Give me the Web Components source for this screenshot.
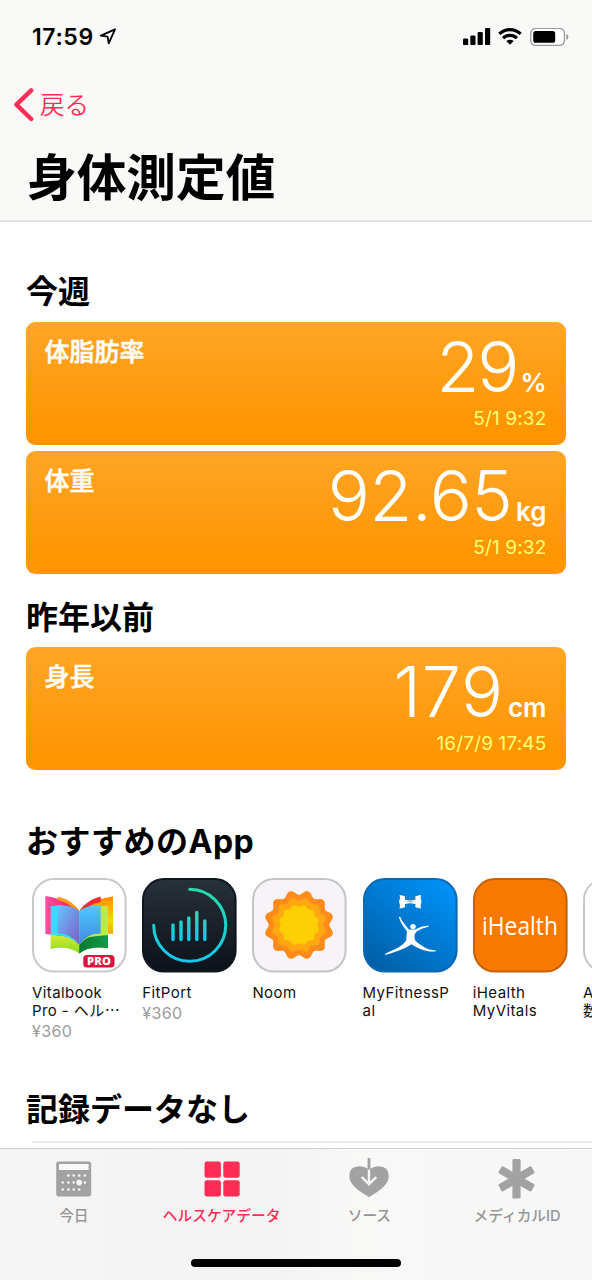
<!DOCTYPE html>
<html lang="ja">
<head>
<meta charset="utf-8">
<title>身体測定値</title>
<style>
  html, body {
    margin: 0;
    padding: 0;
    background: #fff;
  }
  body {
    width: 592px;
    height: 1280px;
    overflow: hidden;
    font-family: Inter, "Noto Sans CJK JP", sans-serif;
    color: #000;
  }
  .dots {
    font-family: "Noto Sans CJK JP", sans-serif;
    line-height: 1;
  }
</style>
</head>
<body>
<health-page>
  <status-bar slot="header" time="17:59"></status-bar>
  <nav-header slot="header" back="戻る">身体測定値</nav-header>

  <section-title style="--top: 46px; --h: 54px">今週</section-title>
  <data-card label="体脂肪率" value="29" unit="%" date="5/1 9:32" style="--vs: -2.4px; --gap: 3.5px"></data-card>
  <data-card label="体重" value="92.65" unit="kg" date="5/1 9:32" style="--vs: -0.4px; --gap: 3.5px"></data-card>
  <section-title style="--top: 14px; --h: 53px">昨年以前</section-title>
  <data-card label="身長" value="179" unit="cm" date="16/7/9 17:45" style="--vs: 0.8px; --gap: 4px"></data-card>
  <section-title style="--top: 42px; --h: 60px; --ls: 0.5px">おすすめのApp</section-title>
  <app-row>
    <app-tile icon="vitalbook" price="¥360">Vitalbook<br>Pro - ヘル<span class="dots">…</span></app-tile>
    <app-tile icon="fitport" price="¥360">FitPort</app-tile>
    <app-tile icon="noom">Noom</app-tile>
    <app-tile icon="mfp">MyFitnessP<br>al</app-tile>
    <app-tile icon="ihealth">iHealth<br>MyVitals</app-tile>
    <app-tile icon="blank">A<br>数</app-tile>
  </app-row>
  <section-title line style="--top: 35px">記録データなし</section-title>

  <tab-bar slot="footer">
    <tab-item icon="today">今日</tab-item>
    <tab-item icon="data" active>ヘルスケアデータ</tab-item>
    <tab-item icon="source">ソース</tab-item>
    <tab-item icon="medical">メディカルID</tab-item>
  </tab-bar>
</health-page>

<script>
const make = html => {
  const template = document.createElement("template");
  template.innerHTML = html;
  return template;
};

class BaseElement extends HTMLElement {
  constructor() {
    super();
    this._root = this.attachShadow({ mode: "open" });
    this._root.appendChild(this.constructor.template.content.cloneNode(true));
  }

  // copies the named attributes into the elements with the same class
  fill(...names) {
    names.forEach(name => {
      this._root.querySelector("." + name).textContent = this.getAttribute(name) || "";
    });
  }
}

class HealthPage extends BaseElement {
  static template = make(`
<style>
:host {
  display: flex;
  flex-direction: column;
  width: 592px;
  height: 1280px;
}
header {
  box-sizing: border-box;
  flex: none;
  height: 222px;
  background: #f9f9f8;
  border-bottom: 2px solid #e2e2e2;
}
main {
  flex: 1;
  min-height: 0;
  overflow: hidden;
}
</style>
<header><slot name="header"></slot></header>
<main><slot></slot></main>
<slot name="footer"></slot>
`);
}

class StatusBar extends BaseElement {
  static template = make(`
<style>
:host {
  display: flex;
  align-items: center;
  height: 74px;
  padding: 0 23px 0 32px;
}
.time {
  font-size: 23px;
  line-height: 28px;
  font-weight: 600;
  letter-spacing: 0.6px;
}
.arrow { margin: 0 auto 0 5px; }
svg { display: block; }
.wifi { margin: 0 8px 0 7px; }
</style>
<span class="time"></span>
<svg class="arrow" width="18" height="18" viewBox="0 0 18 18" fill="none" stroke="#000" stroke-width="1.8" stroke-linejoin="round"><path d="M16 1.4 L1.8 7.6 L8.6 8.6 L9.7 15.4 Z"/></svg>
<svg class="bars" width="28" height="18" viewBox="0 0 28 18"><rect x="0" y="10.5" width="5.2" height="6.6" rx="1.2"/><rect x="7.3" y="7.5" width="5.2" height="9.6" rx="1.2"/><rect x="14.6" y="4" width="5.2" height="13.1" rx="1.2"/><rect x="22" y="0.1" width="5.2" height="17" rx="1.2"/></svg>
<svg class="wifi" width="24" height="18" viewBox="0 0 24 18" fill="none" stroke="#000" stroke-width="3.2"><path d="M1.3 5.9 A15.6 15.6 0 0 1 22.7 5.9"/><path d="M5.1 10.1 A10 10 0 0 1 18.9 10.1"/><path d="M12 16.7 L8.3 13.1 Q12 10.3 15.7 13.1 Z" fill="#000" stroke="none"/></svg>
<svg class="battery" width="39" height="19" viewBox="0 0 39 19"><rect x="0.8" y="0.4" width="33.6" height="17" rx="5" fill="#fff" stroke="#999" stroke-width="1.3"/><rect x="3.2" y="3" width="22" height="11.8" rx="2.6"/><path d="M36.3 5.8 Q38.4 6.8 38.4 8.9 Q38.4 11.2 36.3 12.1 Z" fill="#999"/></svg>
`);

  connectedCallback() {
    this.fill("time");
  }
}

class NavHeader extends BaseElement {
  static template = make(`
<style>
:host { display: block; }
.bar {
  display: flex;
  align-items: center;
  height: 62px;
  padding-left: 13px;
  color: #ff2d55;
  font-size: 24.5px;
  font-weight: 350;
}
.back { margin-top: -3px; }
svg { margin-right: 6px; }
h1 {
  margin: 0;
  padding-left: 27px;
  height: 82px;
  line-height: 84px;
  font-size: 49.7px;
  font-weight: 700;
}
</style>
<div class="bar">
  <svg width="21" height="34" viewBox="0 0 21 34" fill="none" stroke="#ff2d55" stroke-width="4.4" stroke-linecap="round" stroke-linejoin="round"><path d="M18.2 2.4 L3.4 16.6 L18.2 31"/></svg>
  <span class="back"></span>
</div>
<h1><slot></slot></h1>
`);

  connectedCallback() {
    this.fill("back");
  }
}

class SectionTitle extends BaseElement {
  static template = make(`
<style>
:host {
  display: block;
  padding-top: var(--top);
}
h2 {
  margin: 0;
  padding-left: 26px;
  height: var(--h);
  line-height: 48px;
  font-size: 32px;
  font-weight: 700;
  letter-spacing: var(--ls, 0);
  white-space: nowrap;
}
:host([line]) h2 {
  height: 55px;
}
:host([line])::after {
  content: "";
  display: block;
  margin-left: 32px;
  height: 2px;
  background: #ebebeb;
}
</style>
<h2><slot></slot></h2>
`);
}

class DataCard extends BaseElement {
  static template = make(`
<style>
:host {
  display: flex;
  justify-content: space-between;
  box-sizing: border-box;
  height: 123px;
  margin: 0 26.5px 6px 25.5px;
  padding: 0 19px;
  border-radius: 9.5px;
  background: linear-gradient(#ffa526, #ff9500 92%);
  color: #fff;
}
.label {
  padding-top: 12px;
  font-size: 25px;
  line-height: 36px;
  font-weight: 500;
  -webkit-text-stroke: 0.5px #fff;
}
.right {
  display: flex;
  flex-direction: column;
  align-items: flex-end;
}
.reading {
  display: flex;
  align-items: baseline;
  height: 84px;
  line-height: 90px;
}
.value {
  font-size: 70px;
  font-weight: 300;
  letter-spacing: var(--vs, 0);
}
.unit {
  margin-left: var(--gap, 3px);
  font-size: 26px;
  font-weight: 600;
}
.date {
  color: #ffff73;
  font-size: 19px;
  line-height: 26px;
  letter-spacing: 0.15px;
}
</style>
<div class="label"></div>
<div class="right">
  <div class="reading"><span class="value"></span><span class="unit"></span></div>
  <div class="date"></div>
</div>
`);

  connectedCallback() {
    this.fill("label", "value", "unit", "date");
  }
}

class AppRow extends BaseElement {
  static template = make(`
<style>
:host {
  display: flex;
  gap: 15.2px;
  height: 173px;
  padding-left: 32px;
  overflow: hidden;
}
</style>
<slot></slot>
`);
}

// closed wavy outline round the middle of an app icon
const wave = (radius, depth, bumps, turn) => {
  const points = [];
  for (let a = 0; a < 360; a += 3) {
    const t = (a * Math.PI) / 180;
    const r = radius + depth * Math.cos(bumps * (t - (turn * Math.PI) / 180));
    points.push((47 + r * Math.cos(t)).toFixed(2) + " " + (47 + r * Math.sin(t)).toFixed(2));
  }
  return "M" + points.join("L") + "Z";
};

const frame = (fill, stroke) =>
  `<rect x="1" y="1" width="92.6" height="92.6" rx="21" fill="${fill}" stroke="${stroke}" stroke-width="2"/>`;

const appIcons = {
  vitalbook: `
<defs>
  <linearGradient id="pink" x2="1"><stop stop-color="#ff4fa8"/><stop offset="1" stop-color="#f5103c"/></linearGradient>
  <linearGradient id="sun" x2="0" y2="1"><stop stop-color="#ff8a00"/><stop offset=".55" stop-color="#ffd800"/><stop offset="1" stop-color="#ff8a1a"/></linearGradient>
  <linearGradient id="lime" y2="1" x2="0"><stop stop-color="#f0f03c"/><stop offset="1" stop-color="#8cdc1e"/></linearGradient>
  <linearGradient id="leaf" x2="1"><stop stop-color="#067a34"/><stop offset="1" stop-color="#169a48"/></linearGradient>
  <linearGradient id="left" y2="1" x2="1"><stop stop-color="#66c4ff"/><stop offset="1" stop-color="#7d5cc4"/></linearGradient>
  <linearGradient id="right" y2="1" x2="0"><stop stop-color="#4cc8ff"/><stop offset="1" stop-color="#4488dc"/></linearGradient>
</defs>
${frame("#fff", "#c8c8c8")}
<path d="M18.7 50V71Q36 67 47.3 75.5Q58 67 76 70.3V50Z" fill="url(#lime)"/>
<path d="M47.3 75.5Q57 67 76 70.3V56Q55 56 47.3 67Z" fill="url(#leaf)"/>
<path d="M13.3 18Q38 22 47.3 33V60L13.3 56Z" fill="url(#pink)"/>
<path d="M81 18.5Q57 22 47.3 33V62Q62 53 81 56Z" fill="url(#sun)"/>
<path d="M25.7 18.5Q40 22 47.3 32.7L40 29Q34 24 25.7 22Z" fill="#ff9a16"/>
<path d="M68.7 18.5Q55 22 47.3 32.7L56 29Q62 25 68.7 24Z" fill="#f52a38"/>
<path d="M76 28Q56 27 47.3 34V60L76 57Z" fill="#bdea4a"/>
<path d="M18.7 28Q39 26 47.3 34V67Q37 56 18.7 57Z" fill="#35dcff"/>
<path d="M25.7 27Q40 27 47.3 33V67Q39 55 25.7 55.5Z" fill="url(#left)"/>
<path d="M68.7 28Q55 27 47.3 33V67Q55 55 68.7 55.5Z" fill="url(#right)"/>
<rect x="51.3" y="77" width="31.2" height="12.6" rx="3.6" fill="#dc143c"/>
<text x="67" y="87.4" font-family="Open Sans" font-size="11.2" font-weight="800" fill="#fff" text-anchor="middle" textLength="24">PRO</text>`,
  fitport: `
<defs>
  <linearGradient id="night" y2="1" x2="0"><stop stop-color="#28303a"/><stop offset="1" stop-color="#0c1219"/></linearGradient>
  <linearGradient id="teal" gradientUnits="userSpaceOnUse" x1="0" y1="11" x2="0" y2="83"><stop stop-color="#26dcaa"/><stop offset="1" stop-color="#12c8f0"/></linearGradient>
  <linearGradient id="bar" gradientUnits="userSpaceOnUse" x1="0" y1="33" x2="0" y2="63"><stop stop-color="#26dcaa"/><stop offset="1" stop-color="#12c8f0"/></linearGradient>
</defs>
${frame("url(#night)", "#10161d")}
<path d="M47.7 11.3A36 36 0 1 1 11.7 47.3" fill="none" stroke="url(#teal)" stroke-width="3" stroke-linecap="round"/>
<path d="M31 47V61.5M39 44V61.5M46.8 40V61.5M54.8 34.5V61.5M62.8 43V61.5" fill="none" stroke="url(#bar)" stroke-width="3.4" stroke-linecap="round"/>`,
  noom: `
${frame("#f6f4f8", "#c4c4c4")}
<path d="${wave(32.6, 2.4, 12, 15)}" fill="#ff8b1a"/>
<path d="${wave(26, 1.6, 12, 15)}" fill="#ffa812"/>
<path d="${wave(19.3, 1.1, 12, 15)}" fill="#ffcf06"/>`,
  mfp: `
<defs>
  <linearGradient id="sky" x1="1" y1="0" x2="0.2" y2="1"><stop stop-color="#0096ff"/><stop offset="1" stop-color="#0060a8"/></linearGradient>
</defs>
${frame("url(#sky)", "#0768b4")}
<path d="M36.6 17Q39.5 17.2 42.2 18.6L41.8 21.4Q47.2 23.4 52.6 21.4L52.2 18.6Q55 17.2 58 17Q56.8 20.2 58.6 23.8Q56.8 27.4 58 30.6Q55 30.2 52.2 29L52.6 26.2Q47.2 24.2 41.8 26.2L42.2 29Q39.5 30.2 36.6 30.6Q37.8 27.4 36 23.8Q37.8 20.2 36.6 17Z" fill="#fff"/>
<path d="M42.4 23.8Q47.3 23.1 52 23.8Q47.3 24.5 42.4 23.8Z" fill="#0780d8"/>
<circle cx="50" cy="48.6" r="2.7" fill="#fff"/>
<path d="M35.6 38.4L37.4 39.2L39 42.6Q42 47.2 46 51.6L52.2 51.4Q57.6 48.4 65.4 47.6L65.6 48.8Q59 50 53.6 53.6L51.6 56.6Q51 59.6 52.2 62.4Q57 67.4 66.4 71.6L72.8 72.4V73.6L66 73.6Q56 71.4 48.4 66.2Q41 71.4 27.4 75.4L23 76.8L21.4 76.2L25.6 74Q38.6 69.4 43.2 62.6L43.6 57L44 53.6Q40 48.4 37.4 43.2Z" fill="#fff"/>`,
  ihealth: `
${frame("#f97800", "#c66206")}
<text x="9" y="57" font-family="Open Sans" font-size="25" font-weight="400" fill="#fff" textLength="76" lengthAdjust="spacingAndGlyphs">iHealth</text>`,
  blank: frame("#fff", "#c8c8c8")
};

class AppTile extends BaseElement {
  static template = make(`
<style>
:host {
  display: flex;
  flex-direction: column;
  flex: none;
  width: 95px;
}
svg { display: block; }
.name {
  margin-top: 10.5px;
  font-size: 15px;
  line-height: 18.5px;
  letter-spacing: 0.42px;
  color: #111;
  white-space: nowrap;
}
.price {
  margin-top: 1.5px;
  font-size: 16px;
  line-height: 19px;
  letter-spacing: 0.4px;
  color: #9b9b9b;
}
</style>
<svg width="95" height="95" viewBox="0 0 95 95"></svg>
<div class="name"><slot></slot></div>
<div class="price"></div>
`);

  connectedCallback() {
    this.fill("price");
    this._root.querySelector("svg").innerHTML = appIcons[this.getAttribute("icon")];
  }
}

class TabBar extends BaseElement {
  static template = make(`
<style>
:host {
  display: flex;
  flex-direction: column;
  box-sizing: border-box;
  flex: none;
  height: 132px;
  border-top: 1px solid #cfcfcf;
  background: linear-gradient(90deg, #f5f5f5, #f3f3f3 45%, #f8f8f7 60%, #f7f7f7);
}
.tabs {
  display: flex;
  width: 591px;
  height: 110px;
}
.home {
  align-self: center;
  width: 210px;
  height: 8px;
  border-radius: 4px;
  background: #000;
}
</style>
<div class="tabs"><slot></slot></div>
<div class="home"></div>
`);
}

const dots = [
  [12.2, 14], [17.5, 14], [23, 14], [28.7, 14],
  [6.5, 21.2], [12.2, 21.2], [17.5, 21.2], [28.7, 21.2],
  [6.5, 28.2], [12.2, 28.2], [17.5, 28.2], [23, 28.2]
];

const tabIcons = {
  today: `<g transform="translate(2.2 2.4)"><rect width="35" height="35" rx="2.6"/><rect x="2.8" y="2.6" width="29.6" height="6" fill="#f8f8f8"/>
${dots.map(([x, y]) => `<circle cx="${x}" cy="${y}" r="1.25" fill="#f8f8f8"/>`).join("")}<circle cx="23" cy="21.2" r="2.8" fill="#f8f8f8"/></g>`,
  data: `<g transform="translate(2.5 2.4)"><rect width="16.4" height="16.4" rx="2.4"/><rect x="18.8" width="16.4" height="16.4" rx="2.4"/><rect y="18.8" width="16.4" height="16.4" rx="2.4"/><rect x="18.8" y="18.8" width="16.4" height="16.4" rx="2.4"/></g>`,
  source: `<path d="M20 38Q.3 27.2 .3 17.5Q.3 7.3 10.2 7.3Q16 7.3 20 10.9Q24 7.3 29.8 7.3Q39.7 7.3 39.7 17.5Q39.7 27.2 20 38Z"/>
<path d="M20 10.5V24.6M12.7 18L20 25.2L27.3 18" fill="none" stroke="#f8f8f8" stroke-width="2.4"/><rect x="18.6" y="-1" width="2.8" height="11.6" rx="1"/>`,
  medical: `<g transform="translate(19.5 19.8)"><rect x="-4.1" y="-19.8" width="8.2" height="39.6" rx="1.4"/><rect x="-4.1" y="-19" width="8.2" height="38" rx="1.4" transform="rotate(60)"/><rect x="-4.1" y="-19" width="8.2" height="38" rx="1.4" transform="rotate(-60)"/></g>`
};

class TabItem extends BaseElement {
  static template = make(`
<style>
:host {
  display: flex;
  flex-direction: column;
  flex: 1;
  align-items: center;
  padding-top: 10px;
  color: #969696;
}
:host([active]) { color: #ff2d55; }
svg {
  display: block;
  fill: #a2a2a2;
  overflow: visible;
}
:host([active]) svg { fill: #ff2d55; }
.text {
  margin-top: 6px;
  font-size: 14.7px;
  line-height: 22px;
  font-weight: 500;
  white-space: nowrap;
}
</style>
<svg width="40" height="40" viewBox="0 0 40 40"></svg>
<div class="text"><slot></slot></div>
`);

  connectedCallback() {
    this._root.querySelector("svg").innerHTML = tabIcons[this.getAttribute("icon")];
  }
}

customElements.define("health-page", HealthPage);
customElements.define("status-bar", StatusBar);
customElements.define("nav-header", NavHeader);
customElements.define("section-title", SectionTitle);
customElements.define("data-card", DataCard);
customElements.define("app-row", AppRow);
customElements.define("app-tile", AppTile);
customElements.define("tab-bar", TabBar);
customElements.define("tab-item", TabItem);
</script>
</body>
</html>
